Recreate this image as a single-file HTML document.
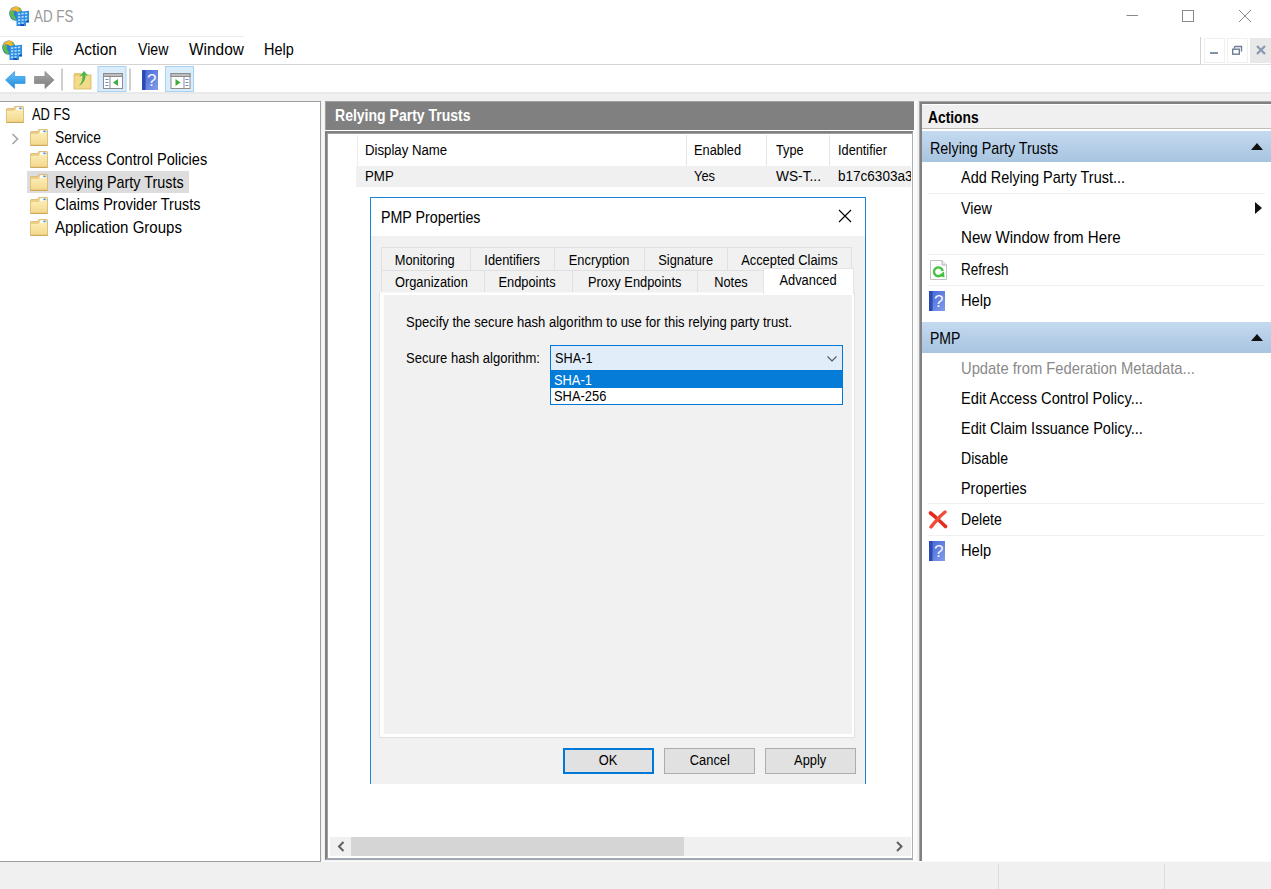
<!DOCTYPE html>
<html><head><meta charset="utf-8"><title>AD FS</title>
<style>
*{box-sizing:border-box;margin:0;padding:0}
html,body{width:1271px;height:889px;overflow:hidden;background:#fff}
body{position:relative;font-family:"Liberation Sans",sans-serif;font-size:15px;color:#000}
.a{position:absolute}
.t{position:absolute;white-space:nowrap;line-height:20px;height:20px;transform-origin:0 50%}
.seg{font-size:15px;letter-spacing:-0.25px}
.ms{font-size:13px;line-height:16px;height:16px}
.tab{position:absolute;height:23px;background:#f1f1f1;border:1px solid #e0e0e0;border-bottom:none;font-size:15.3px;text-align:center;line-height:22px;white-space:nowrap}
.btn{position:absolute;top:748px;height:26px;background:#e1e1e1;border:1px solid #adadad;font-size:15.3px;text-align:center;line-height:22.5px}
.tab span,.btn span{display:inline-block;transform:scaleX(.84)}
.sep{position:absolute;left:928px;width:337px;height:1px;background:#f0f0f0}
.fold{position:absolute;width:18px;height:17px}
</style></head><body>
<svg width="0" height="0" style="position:absolute">
<defs>
<linearGradient id="gf" x1="0" y1="0" x2="0" y2="1"><stop offset="0" stop-color="#fcedb5"/><stop offset="1" stop-color="#f3d88c"/></linearGradient>
<symbol id="folder" viewBox="0 0 18 17">
<path d="M0.500 3.200 Q0.500 2.500 1.200 2.500 H7.800 L8.800 0.500 H16.800 Q17.500 0.500 17.500 1.200 V16.500 H0.500Z" fill="#ecd08a" stroke="#d5b366" stroke-width="0.8"/>
<rect x="9.800" y="1.200" width="6.600" height="3.200" fill="#fffdf6"/>
<rect x="13.200" y="1.500" width="2.600" height="1.700" rx="0.800" fill="#3f9be3"/>
<path d="M0.900 5 H8.200 L9.400 3.900 H17.100 V16.100 H0.900Z" fill="url(#gf)"/>
<path d="M0.500 16.300 H17.500" stroke="#c8a24e" stroke-width="0.9"/>
</symbol>
<linearGradient id="gh" x1="0" y1="0" x2="1" y2="1"><stop offset="0" stop-color="#4265d6"/><stop offset="1" stop-color="#829dea"/></linearGradient>
<symbol id="help" viewBox="0 0 16 20">
<rect x="0" y="0" width="16" height="20" fill="url(#gh)"/>
<rect x="0" y="0" width="3.500" height="20" fill="#2d49b4"/>
<text x="9.800" y="16" font-family="Liberation Sans, sans-serif" font-size="17" fill="#f4f6ff" text-anchor="middle">?</text>
</symbol>
<symbol id="adfs" viewBox="0 0 20 20">
<ellipse cx="6.8" cy="7.6" rx="6.6" ry="7.2" fill="#2c79d3"/>
<path d="M0.8 5.5 Q2.5 0.8 7.5 0.5 Q11.5 1 12.5 4 Q10 7.5 7 5.2 Q4 3.8 0.8 5.5Z" fill="#f6b62f"/>
<path d="M1.5 5 Q4.5 4 5.5 6.5 Q4 8 5.5 10 Q7.5 11.5 6.5 14.5 Q3 13.5 1 9.5 Q0.3 7 1.5 5Z" fill="#5dbb46"/>
<path d="M9 1.2 Q11.5 2 12.3 4.2 L10.2 4.5Z" fill="#66c04a"/>
<path d="M7.500 6 L20 4.800 V16.500 H17 V20 H7.500Z" fill="#2e90e3"/>
<path d="M9 8.200 L18.500 7.200 M9 11.200 L18.500 10.500 M9 14.200 L18.500 13.800 M9 17.200 L15.500 17" stroke="#bfe1fa" stroke-width="1.5" stroke-dasharray="2.2 1.3"/>
<rect x="17.300" y="14.600" width="2.500" height="1.800" fill="#1546b8"/>
<rect x="11.500" y="18.200" width="3.500" height="1.800" fill="#1546b8"/>
</symbol>
</defs></svg>

<svg class="a" style="left:9px;top:6px" width="20" height="20"><use href="#adfs"/></svg>
<div class="t" style="left:34px;top:6.5px;font-size:15.9px;font-weight:normal;color:#999;line-height:20px;height:20px;transform:scaleX(0.8419);">AD FS</div>

<svg class="a" style="left:1120px;top:4px" width="140" height="24" viewBox="0 0 140 24">
<path d="M6.5 11.5 H18" stroke="#8a8a8a" stroke-width="1" fill="none"/>
<rect x="62.5" y="6.5" width="11" height="11" stroke="#8a8a8a" stroke-width="1" fill="none"/>
<path d="M119 6 L131 18 M131 6 L119 18" stroke="#8a8a8a" stroke-width="1" fill="none"/>
</svg>

<div class="a" style="left:0;top:36px;width:244px;height:1px;background:#ececec"></div>
<div class="a" style="left:0;top:64px;width:1201px;height:1px;background:#d4d4d4"></div>
<div class="a" style="left:1200px;top:37px;width:1px;height:28px;background:#d4d4d4"></div>
<div class="a" style="left:1201px;top:64px;width:70px;height:1px;background:#e2e2e2"></div>
<svg class="a" style="left:2px;top:40px" width="20" height="20"><use href="#adfs"/></svg>
<div class="t" style="left:32px;top:39.5px;font-size:15.9px;font-weight:normal;color:#000;line-height:20px;height:20px;transform:scaleX(0.8122);">File</div>

<div class="t" style="left:74px;top:39.5px;font-size:15.9px;font-weight:normal;color:#000;line-height:20px;height:20px;transform:scaleX(0.9689);">Action</div>

<div class="t" style="left:138px;top:39.5px;font-size:15.9px;font-weight:normal;color:#000;line-height:20px;height:20px;transform:scaleX(0.89);">View</div>

<div class="t" style="left:189px;top:39.5px;font-size:15.9px;font-weight:normal;color:#000;line-height:20px;height:20px;transform:scaleX(0.9711);">Window</div>

<div class="t" style="left:264px;top:39.5px;font-size:15.9px;font-weight:normal;color:#000;line-height:20px;height:20px;transform:scaleX(0.9086);">Help</div>

<!-- mdi child buttons -->
<div class="a" style="left:1204px;top:38px;width:21px;height:25px;border:1px solid #f0f0f0;background:#fff"></div>
<div class="a" style="left:1227px;top:38px;width:21px;height:25px;border:1px solid #f0f0f0;background:#fff"></div>
<div class="a" style="left:1250px;top:38px;width:21px;height:25px;background:#e8e8e8"></div>
<svg class="a" style="left:1204px;top:38px" width="67" height="25" viewBox="0 0 67 25">
<rect x="6" y="14" width="8" height="2" fill="#8393a8"/>
<path d="M30.5 8.5 h7 v5 M30.5 8.5 v2" stroke="#6d7d93" stroke-width="1.4" fill="none"/>
<rect x="28.7" y="11.2" width="6.6" height="5" stroke="#6d7d93" stroke-width="1.4" fill="#fff"/>
<path d="M53 8 L61 16 M61 8 L53 16" stroke="#8a98ad" stroke-width="2.2" fill="none"/>
</svg>

<div class="a" style="left:0;top:92px;width:1271px;height:2px;background:#e9e9e9"></div>
<div class="a" style="left:0;top:94px;width:1271px;height:795px;background:#f0f0f0"></div>
<svg class="a" style="left:0;top:65px" width="200" height="27" viewBox="0 0 200 27">
<defs>
<linearGradient id="gb" x1="0" y1="0" x2="0" y2="1"><stop offset="0" stop-color="#6cc4f7"/><stop offset="1" stop-color="#1d86de"/></linearGradient>
<linearGradient id="gg" x1="0" y1="0" x2="0" y2="1"><stop offset="0" stop-color="#a9a9a9"/><stop offset="1" stop-color="#7b7b7b"/></linearGradient>
</defs>
<path d="M5.5 15 L14.5 6.5 V11.5 H25 V18.5 H14.5 V23.5 Z" fill="url(#gb)" stroke="#3a9be6" stroke-width="0.8" stroke-linejoin="round"/>
<path d="M54 15 L45 6.5 V11.5 H34.5 V18.5 H45 V23.5 Z" fill="url(#gg)" stroke="#8a8a8a" stroke-width="0.8" stroke-linejoin="round"/>
<rect x="61.5" y="3.5" width="1" height="22" fill="#a0a0a0"/>
<!-- up folder -->
<rect x="74" y="10" width="17" height="14" fill="#f3d98a" stroke="#d8b760" stroke-width="0.8"/>
<path d="M74 10 v-2 h7 l1.5 2z" fill="#e8c971"/>
<path d="M79 21 Q83 16 82.5 10.5 L79.5 11.5 L84 6 L88 10.5 L85.5 10.3 Q86 17 79 21Z" fill="#4fb54a"/>
<!-- show/hide tree -->
<rect x="98" y="1.5" width="28" height="25" fill="#d9ecfb" stroke="#a9d3f5" stroke-width="1"/>
<rect x="103.5" y="8.5" width="19" height="15" fill="#fff" stroke="#8d8d8d" stroke-width="1"/>
<rect x="103.5" y="8.5" width="19" height="3" fill="#bdbdbd" stroke="#8d8d8d" stroke-width="1"/>
<path d="M110 11.5 V23.5" stroke="#8d8d8d" stroke-width="1"/>
<path d="M105.5 14.5h3M105.5 17.5h3M105.5 20.5h3" stroke="#6a8bd0" stroke-width="1.2"/>
<path d="M118 14 V21 L113 17.5Z" fill="#3fae3f"/>
<rect x="129.5" y="3.5" width="1" height="22" fill="#a0a0a0"/>
<!-- action pane -->
<rect x="165.500" y="1.5" width="28" height="25" fill="#d9ecfb" stroke="#a9d3f5" stroke-width="1"/>
<rect x="171" y="8.500" width="19" height="15" fill="#fff" stroke="#8d8d8d" stroke-width="1"/>
<rect x="171" y="8.500" width="19" height="3" fill="#bdbdbd" stroke="#8d8d8d" stroke-width="1"/>
<path d="M184 11.500 V23.500" stroke="#8d8d8d" stroke-width="1"/>
<path d="M185.500 14.500h3M185.500 17.500h3M185.500 20.500h3" stroke="#6a8bd0" stroke-width="1.2"/>
<path d="M175.500 14 V21 L180.500 17.500Z" fill="#3fae3f"/>
</svg>
<svg class="a" style="left:142px;top:70px" width="16" height="20"><use href="#help"/></svg>

<div class="a" style="left:0;top:101px;width:321px;height:761px;background:#fff;border:1px solid #a0a0a0;border-left:none"></div>
<div class="a" style="left:322px;top:101px;width:2px;height:761px;background:#f8f8f8"></div>
<div class="a" style="left:27px;top:171px;width:162px;height:22px;background:#dddddd"></div>
<svg class="fold" style="left:6px;top:106px"><use href="#folder"/></svg>
<svg class="fold" style="left:30px;top:129px"><use href="#folder"/></svg>
<svg class="fold" style="left:30px;top:151px"><use href="#folder"/></svg>
<svg class="fold" style="left:30px;top:174px"><use href="#folder"/></svg>
<svg class="fold" style="left:30px;top:197px"><use href="#folder"/></svg>
<svg class="fold" style="left:30px;top:219px"><use href="#folder"/></svg>
<svg class="a" style="left:11px;top:132.500px" width="9" height="12" viewBox="0 0 9 12"><path d="M1.500 1 L6.500 6 L1.500 11" stroke="#a6a6a6" stroke-width="1.700" fill="none"/></svg>
<div class="t" style="left:32px;top:104.5px;font-size:15.9px;font-weight:normal;color:#000;line-height:20px;height:20px;transform:scaleX(0.812);">AD FS</div>

<div class="t" style="left:55px;top:127.5px;font-size:15.9px;font-weight:normal;color:#000;line-height:20px;height:20px;transform:scaleX(0.866);">Service</div>

<div class="t" style="left:55px;top:149.5px;font-size:15.9px;font-weight:normal;color:#000;line-height:20px;height:20px;transform:scaleX(0.9167);">Access Control Policies</div>

<div class="t" style="left:55px;top:172.5px;font-size:15.9px;font-weight:normal;color:#000;line-height:20px;height:20px;transform:scaleX(0.9044);">Relying Party Trusts</div>

<div class="t" style="left:55px;top:194.5px;font-size:15.9px;font-weight:normal;color:#000;line-height:20px;height:20px;transform:scaleX(0.9097);">Claims Provider Trusts</div>

<div class="t" style="left:55px;top:217.5px;font-size:15.9px;font-weight:normal;color:#000;line-height:20px;height:20px;transform:scaleX(0.9451);">Application Groups</div>


<div class="a" style="left:325px;top:101px;width:589px;height:29px;background:#808080;border-top:1px solid #a0a0a0;border-left:1px solid #a0a0a0"></div>
<div class="t" style="left:334.7px;top:106.0px;font-size:15.9px;font-weight:bold;color:#fff;line-height:20px;height:20px;transform:scaleX(0.8824);">Relying Party Trusts</div>

<div class="a" style="left:325px;top:130px;width:589px;height:2px;background:#fff"></div>
<div class="a" style="left:325px;top:131px;width:589px;height:729px;background:#fff;border:2px solid #808080;border-right:2px solid #aab0b8;border-bottom:2px solid #a0a8b2;box-shadow:inset 1px 1px 0 #a0a0a0"></div>
<div class="a" style="left:913px;top:131px;width:1px;height:729px;background:#fff"></div>
<div class="a" style="left:914px;top:101px;width:3px;height:760px;background:#fbfbfb"></div>
<!-- list header -->
<div class="a" style="left:357px;top:135px;width:1px;height:31px;background:#ededed"></div>
<div class="a" style="left:686px;top:135px;width:1px;height:31px;background:#e5e5e5"></div>
<div class="a" style="left:766px;top:135px;width:1px;height:31px;background:#e5e5e5"></div>
<div class="a" style="left:829px;top:135px;width:1px;height:31px;background:#e5e5e5"></div>
<div class="a" style="left:356px;top:166px;width:555px;height:21px;background:#f0f0f0"></div>
<div class="t" style="left:365px;top:142.2px;font-size:15.3px;font-weight:normal;color:#000;line-height:16px;height:16px;transform:scaleX(0.8633);">Display Name</div>

<div class="t" style="left:694px;top:142.2px;font-size:15.3px;font-weight:normal;color:#000;line-height:16px;height:16px;transform:scaleX(0.8372);">Enabled</div>

<div class="t" style="left:776px;top:142.2px;font-size:15.3px;font-weight:normal;color:#000;line-height:16px;height:16px;transform:scaleX(0.829);">Type</div>

<div class="t" style="left:838px;top:142.2px;font-size:15.3px;font-weight:normal;color:#000;line-height:16px;height:16px;transform:scaleX(0.8334);">Identifier</div>

<div class="t" style="left:365px;top:168.2px;font-size:15.3px;font-weight:normal;color:#000;line-height:16px;height:16px;transform:scaleX(0.8686);">PMP</div>

<div class="t" style="left:694px;top:168.2px;font-size:15.3px;font-weight:normal;color:#000;line-height:16px;height:16px;transform:scaleX(0.8411);">Yes</div>

<div class="t" style="left:776px;top:168.2px;font-size:15.3px;font-weight:normal;color:#000;line-height:16px;height:16px;transform:scaleX(0.8975);">WS-T...</div>

<div class="a" style="left:838px;top:166px;width:73px;height:21px;overflow:hidden"><div class="t" style="left:0px;top:2.2px;font-size:15.3px;font-weight:normal;color:#000;line-height:16px;height:16px;transform:scaleX(0.8846);">b17c6303a3</div>
</div>
<!-- h scrollbar -->
<div class="a" style="left:330px;top:837px;width:581px;height:19px;background:#f0f0f0"></div>
<div class="a" style="left:351px;top:837px;width:333px;height:19px;background:#d5d5d5"></div>
<svg class="a" style="left:330px;top:837px" width="581" height="19" viewBox="0 0 581 19">
<path d="M13.5 5 L9 9.500 L13.5 14" stroke="#606060" stroke-width="2" fill="none"/>
<path d="M567 5 L571.500 9.500 L567 14" stroke="#606060" stroke-width="2" fill="none"/>
</svg>

<div class="a" id="dlg" style="left:370px;top:197px;width:496px;height:587px;background:#f1f1f1;border:1px solid #1883d7;border-bottom:none"></div>
<div class="a" style="left:371px;top:198px;width:494px;height:38px;background:#fff"></div>
<div class="t" style="left:381px;top:207.5px;font-size:15.9px;font-weight:normal;color:#000;line-height:20px;height:20px;transform:scaleX(0.8964);">PMP Properties</div>

<svg class="a" style="left:838px;top:209px" width="14" height="14" viewBox="0 0 14 14"><path d="M1 1 L13 13 M13 1 L1 13" stroke="#000" stroke-width="1.1" fill="none"/></svg>
<!-- tabs row1 -->
<div class="tab" style="left:381px;top:247px;height:24px;line-height:23px;width:90px;padding-right:2px"><span>Monitoring</span></div>
<div class="tab" style="left:470px;top:247px;height:24px;line-height:23px;width:85px"><span>Identifiers</span></div>
<div class="tab" style="left:554px;top:247px;height:24px;line-height:23px;width:91px"><span>Encryption</span></div>
<div class="tab" style="left:644px;top:247px;height:24px;line-height:23px;width:84px"><span>Signature</span></div>
<div class="tab" style="left:727px;top:247px;height:24px;line-height:23px;width:125px"><span>Accepted Claims</span></div>
<!-- tabs row2 -->
<div class="tab" style="left:381px;top:270px;width:104px;padding-right:4px"><span>Organization</span></div>
<div class="tab" style="left:484px;top:270px;width:89px;padding-right:2px"><span>Endpoints</span></div>
<div class="tab" style="left:572px;top:270px;width:126px"><span>Proxy Endpoints</span></div>
<div class="tab" style="left:697px;top:270px;width:67px"><span>Notes</span></div>
<!-- panel -->
<div class="a" style="left:379px;top:292px;width:476px;height:446px;background:#fff;border:1px solid #e2e2e2;border-top-color:#f8f8f8"></div>
<div class="a" style="left:384px;top:295px;width:468px;height:439px;background:#f1f1f1"></div>
<div class="tab" style="left:763px;top:268px;width:91px;height:26px;background:#fff;border-color:#e4e4e4;line-height:21px"><span>Advanced</span></div>
<div class="t" style="left:406px;top:314.2px;font-size:15.3px;font-weight:normal;color:#000;line-height:16px;height:16px;transform:scaleX(0.8534);">Specify the secure hash algorithm to use for this relying party trust.</div>

<div class="t" style="left:406px;top:350.2px;font-size:15.3px;font-weight:normal;color:#000;line-height:16px;height:16px;transform:scaleX(0.8518);">Secure hash algorithm:</div>

<!-- combo -->
<div class="a" style="left:550px;top:345px;width:293px;height:26px;background:#e1eefa;border:1px solid #0078d7"></div>
<div class="t" style="left:555px;top:350.2px;font-size:15.3px;font-weight:normal;color:#000;line-height:16px;height:16px;transform:scaleX(0.8322);">SHA-1</div>

<svg class="a" style="left:825.500px;top:354.500px" width="12" height="8" viewBox="0 0 12 8"><path d="M1.500 1.500 L6 6 L10.500 1.500" stroke="#555" stroke-width="1.1" fill="none"/></svg>
<div class="a" style="left:550px;top:370px;width:293px;height:35px;background:#fff;border:1px solid #0078d7"></div>
<div class="a" style="left:551px;top:371px;width:291px;height:17px;background:#047cd8"></div>
<div class="t" style="left:554px;top:371.7px;font-size:15.3px;font-weight:normal;color:#fff;line-height:16px;height:16px;transform:scaleX(0.8388);">SHA-1</div>

<div class="t" style="left:554px;top:387.7px;font-size:15.3px;font-weight:normal;color:#000;line-height:16px;height:16px;transform:scaleX(0.8441);">SHA-256</div>

<!-- buttons -->
<div class="btn" style="left:563px;width:91px;border:2px solid #0078d7;line-height:20.5px"><span>OK</span></div>
<div class="btn" style="left:664px;width:91px"><span>Cancel</span></div>
<div class="btn" style="left:765px;width:91px"><span>Apply</span></div>

<div class="a" style="left:919px;top:101px;width:352px;height:760px;background:#fff;border-top:3px solid #808080;border-left:3px solid #808080"></div>
<div class="a" style="left:919px;top:101px;width:352px;height:1px;background:#a8a8a8"></div>
<div class="a" style="left:919px;top:101px;width:1px;height:760px;background:#a8a8a8"></div>
<div class="a" style="left:922px;top:105px;width:349px;height:23px;background:#f0f0f0"></div>
<div class="a" style="left:922px;top:128px;width:349px;height:1px;background:#bdbdbd"></div>
<div class="a" style="left:922px;top:131px;width:349px;height:31px;background:linear-gradient(#c4daf0,#a8c4e0)"></div>
<div class="a" style="left:922px;top:322px;width:349px;height:31px;background:linear-gradient(#c4daf0,#a8c4e0)"></div>
<svg class="a" style="left:1251px;top:143px" width="12" height="7" viewBox="0 0 12 7"><path d="M0 7 L6 0 L12 7Z" fill="#111"/></svg>
<svg class="a" style="left:1251px;top:334px" width="12" height="7" viewBox="0 0 12 7"><path d="M0 7 L6 0 L12 7Z" fill="#111"/></svg>
<svg class="a" style="left:1255px;top:202px" width="7" height="12" viewBox="0 0 7 12"><path d="M0 0 L7 6 L0 12Z" fill="#111"/></svg>
<div class="t" style="left:928px;top:107.5px;font-size:15.9px;font-weight:bold;color:#000;line-height:20px;height:20px;transform:scaleX(0.8699);">Actions</div>
<div class="t" style="left:930px;top:138.5px;font-size:15.9px;font-weight:normal;color:#000;line-height:20px;height:20px;transform:scaleX(0.9009);">Relying Party Trusts</div>
<div class="t" style="left:930px;top:328.7px;font-size:15.9px;font-weight:normal;color:#000;line-height:20px;height:20px;transform:scaleX(0.8828);">PMP</div>
<div class="t" style="left:960.8px;top:167.7px;font-size:15.9px;font-weight:normal;color:#000;line-height:20px;height:20px;transform:scaleX(0.9102);">Add Relying Party Trust...</div>
<div class="t" style="left:960.8px;top:198.6px;font-size:15.9px;font-weight:normal;color:#000;line-height:20px;height:20px;transform:scaleX(0.9047);">View</div>
<div class="t" style="left:960.8px;top:228.3px;font-size:15.9px;font-weight:normal;color:#000;line-height:20px;height:20px;transform:scaleX(0.9512);">New Window from Here</div>
<div class="t" style="left:960.8px;top:260.0px;font-size:15.9px;font-weight:normal;color:#000;line-height:20px;height:20px;transform:scaleX(0.8537);">Refresh</div>
<div class="t" style="left:960.8px;top:290.9px;font-size:15.9px;font-weight:normal;color:#000;line-height:20px;height:20px;transform:scaleX(0.9239);">Help</div>
<div class="t" style="left:960.8px;top:359.1px;font-size:15.9px;font-weight:normal;color:#8a8a8a;line-height:20px;height:20px;transform:scaleX(0.9291);">Update from Federation Metadata...</div>
<div class="t" style="left:960.8px;top:388.8px;font-size:15.9px;font-weight:normal;color:#000;line-height:20px;height:20px;transform:scaleX(0.925);">Edit Access Control Policy...</div>
<div class="t" style="left:960.8px;top:418.9px;font-size:15.9px;font-weight:normal;color:#000;line-height:20px;height:20px;transform:scaleX(0.9127);">Edit Claim Issuance Policy...</div>
<div class="t" style="left:960.8px;top:448.6px;font-size:15.9px;font-weight:normal;color:#000;line-height:20px;height:20px;transform:scaleX(0.8868);">Disable</div>
<div class="t" style="left:960.8px;top:478.6px;font-size:15.9px;font-weight:normal;color:#000;line-height:20px;height:20px;transform:scaleX(0.9056);">Properties</div>
<div class="t" style="left:960.8px;top:510.0px;font-size:15.9px;font-weight:normal;color:#000;line-height:20px;height:20px;transform:scaleX(0.8882);">Delete</div>
<div class="t" style="left:960.8px;top:540.9px;font-size:15.9px;font-weight:normal;color:#000;line-height:20px;height:20px;transform:scaleX(0.9239);">Help</div>
<div class="sep" style="top:192.5px"></div>
<div class="sep" style="top:253.5px"></div>
<div class="sep" style="top:284.5px"></div>
<div class="sep" style="top:503px"></div>
<div class="sep" style="top:534.5px"></div>

<svg class="a" style="left:929px;top:290.500px" width="16" height="20"><use href="#help"/></svg>
<svg class="a" style="left:929px;top:540.500px" width="16" height="20"><use href="#help"/></svg>
<svg class="a" style="left:930px;top:260px" width="17" height="20" viewBox="0 0 17 20">
<path d="M0.500 0.500 H12 L16.500 5 V19.500 H0.500Z" fill="#fff" stroke="#c2c2c2"/>
<path d="M12 0.500 V5 H16.500" fill="#e8e8e8" stroke="#b5b5b5"/>
<path d="M12.700 11 A4.400 4.400 0 1 0 11 15.300" stroke="#42c23f" stroke-width="2.400" fill="none"/>
<path d="M8.500 15.500 L14.500 17.500 L14 11.500Z" fill="#42c23f"/>
</svg>
<svg class="a" style="left:927.500px;top:509.500px" width="20" height="19" viewBox="0 0 20 19">
<path d="M2.500 3 Q7 6.500 10 9.500 Q14 13 17.500 16.500" stroke="#e52b20" stroke-width="3.600" stroke-linecap="round" fill="none"/>
<path d="M17 2 Q12.500 5.500 9.500 9.500 Q6 13 3 17" stroke="#f04a3a" stroke-width="3.400" stroke-linecap="round" fill="none"/>
</svg>

<div class="a" style="left:0;top:862px;width:1271px;height:27px;background:#f0f0f0"></div>
<div class="a" style="left:321px;top:861px;width:950px;height:1px;background:#fafafa"></div>
<div class="a" style="left:998px;top:864px;width:1px;height:25px;background:#dcdcdc"></div>
<div class="a" style="left:1164px;top:864px;width:1px;height:25px;background:#dcdcdc"></div>
</body></html>
